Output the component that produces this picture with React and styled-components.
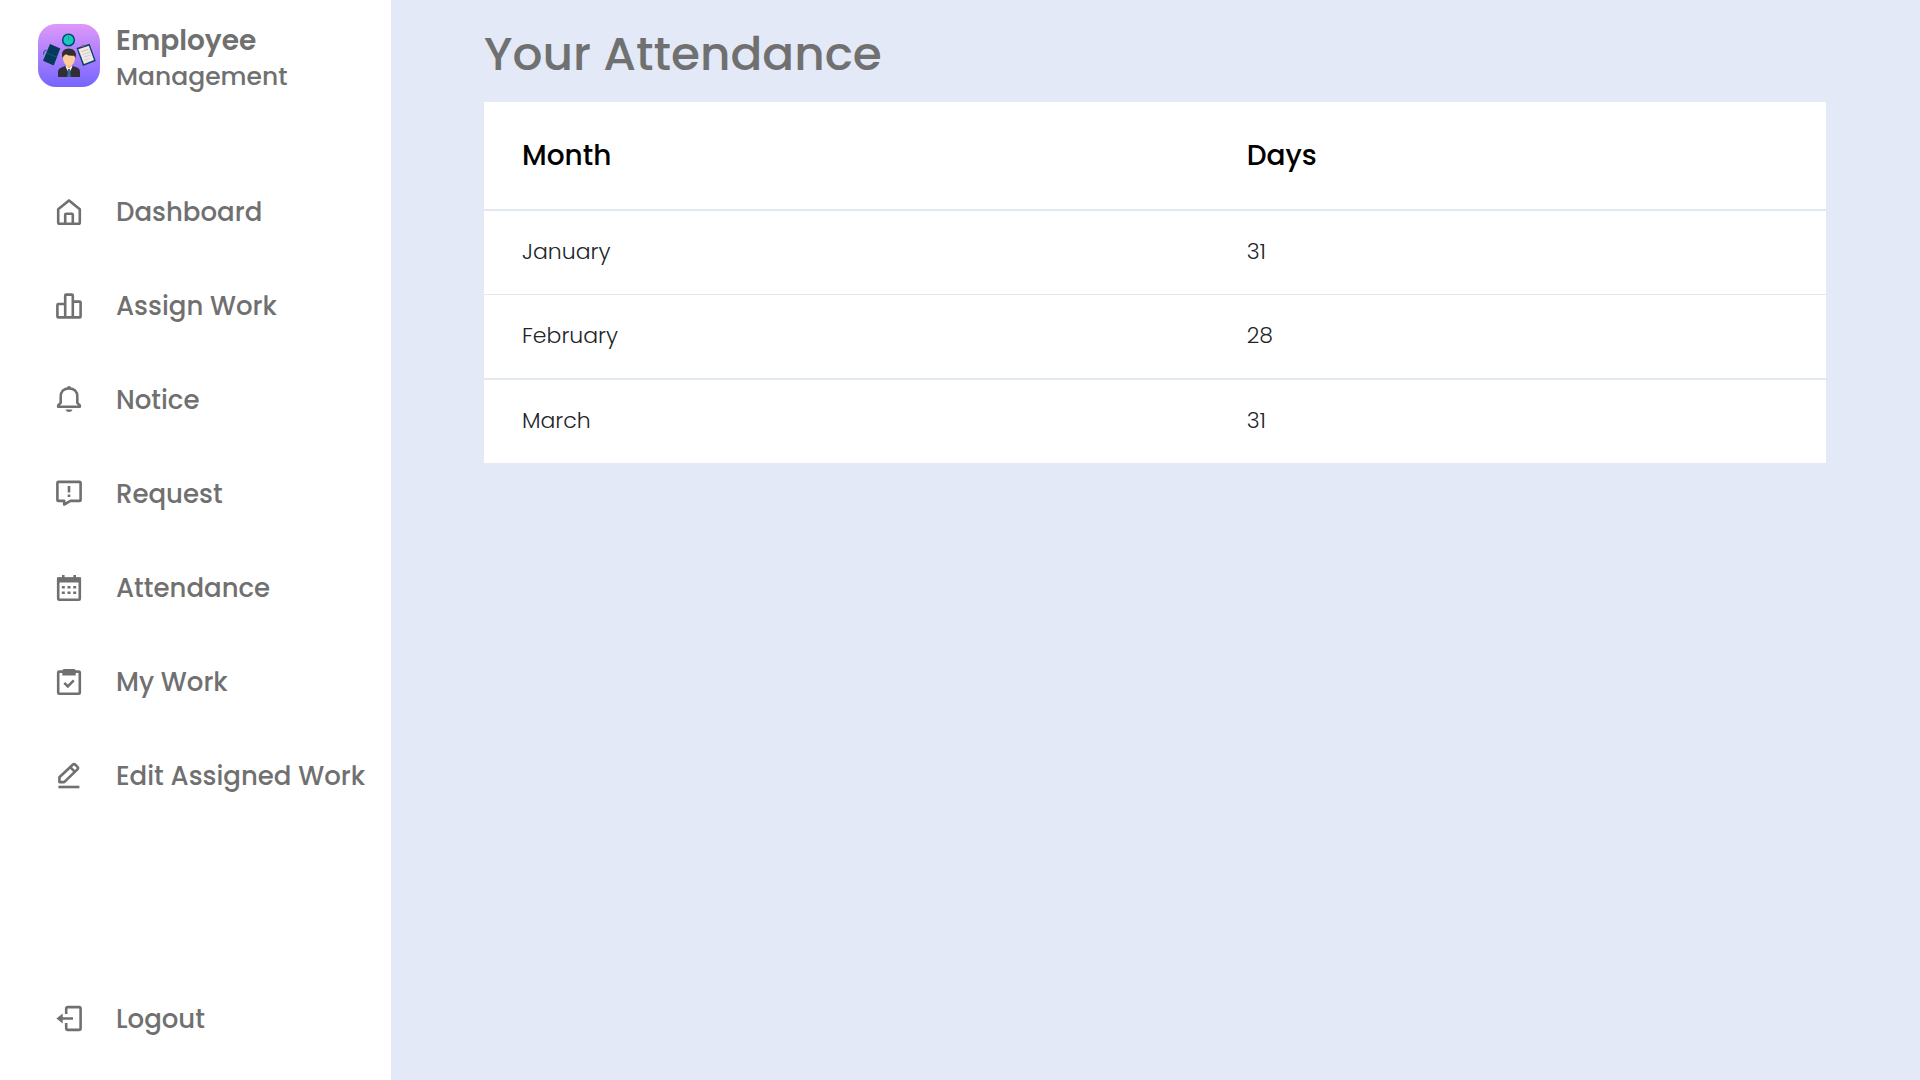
import React from "react";
import styled, { createGlobalStyle } from "styled-components";

const GlobalStyle = createGlobalStyle`
  *, *::before, *::after { box-sizing: border-box; }
  body {
    margin: 0;
    background: #e3e9f7;
    font-family: Poppins, Inter, "Noto Sans", sans-serif;
    color: #707070;
  }
`;

const Page = styled.div`
  display: flex;
  min-height: 100vh;
`;

const Sidebar = styled.aside`
  display: flex;
  flex-direction: column;
  flex: none;
  width: 391px;
  padding: 23px 0 14px 38px;
  background: #fff;
`;

const Brand = styled.header`
  display: flex;
  align-items: flex-start;
  gap: 16px;
`;

const Logo = styled.svg`
  width: 62px;
  height: 64px;
  flex: none;
`;

const BrandText = styled.div`
  display: flex;
  flex-direction: column;
`;

const BrandName = styled.span`
  font-size: 28px;
  line-height: 36px;
  font-weight: 600;
`;

const BrandSub = styled.span`
  font-size: 25px;
  line-height: 36px;
  font-weight: 500;
`;

const Nav = styled.nav`
  display: flex;
  flex-direction: column;
  flex: 1;
  margin-top: 70px;
`;

const NavLink = styled.a`
  display: flex;
  align-items: center;
  gap: 32px;
  height: 94px;
  padding-left: 16px;
  margin-top: ${(p) => (p.$last ? "auto" : "0")};
  color: inherit;
  font-size: 26px;
  line-height: 40px;
  font-weight: 500;
  text-decoration: none;
  white-space: nowrap;
`;

const Icon = styled.svg`
  width: 30px;
  height: 30px;
  flex: none;
  fill: none;
  stroke: currentColor;
  stroke-width: 2.6;
  stroke-linejoin: round;
`;

const Main = styled.main`
  flex: 1;
  min-width: 0;
  padding: 18px 94px 18px 93px;
`;

const Title = styled.h1`
  margin: 0 0 12px;
  font-size: 47px;
  line-height: 72px;
  font-weight: 500;
`;

const Table = styled.table`
  width: 100%;
  border-spacing: 0;
  table-layout: fixed;
  background: #fff;
  text-align: left;
`;

const HeadCell = styled.th`
  width: ${(p) => p.$width};
  height: 109px;
  padding: 0 38px;
  border-bottom: 2px solid #e2e8f0;
  color: #000;
  font-size: 28px;
  font-weight: 500;
`;

const Row = styled.tr`
  --line: 1px;
  &:nth-child(even) { --line: 2px; }
  &:last-child { --line: 0px; }
`;

const Cell = styled.td`
  height: calc(83px + var(--line));
  padding: 0 38px 2px;
  border-bottom: var(--line) solid #e2e8f0;
  color: #212529;
  font-size: 22px;
  line-height: 33px;
  font-weight: 300;
`;

const icons = {
  home: (
    <>
      <path d="M4.2 12.3 15 3.4l10.8 8.9v13.2q0 1.3-1.3 1.3h-19q-1.3 0-1.3-1.3z" />
      <path d="M11.2 26.8v-9q0-1 1-1h5.6q1 0 1 1v9" />
    </>
  ),
  chart: (
    <path d="M11.2 26.4V4.6q0-1 1-1h5.6q1 0 1 1v21.8M11.2 13H4.4q-1 0-1 1v11.4q0 1 1 1h21.2q1 0 1-1V11.6q0-1-1-1h-6.8" />
  ),
  bell: (
    <>
      <path d="M4.2 21.8v-1.4l2.5-2.6v-6.1Q6.7 3.5 15 3.5t8.3 8.2v6.1l2.5 2.600v1.400z" />
      <path d="M11.4 24.400h7.200Q17.600 27 15 27t-3.600-2.600zM12.800 3.400Q13 1 15 1t2.200 2.400z" fill="currentColor" stroke="none" />
    </>
  ),
  request: (
    <>
      <path d="M4.400 2.900h21.200q1 0 1 1v17q0 1-1 1H16.500L10.200 25.500v-3.600H4.400q-1 0-1-1v-17q0-1 1-1z" />
      <path d="M15 6.900v6.600M15 15.500v2.600" />
    </>
  ),
  calendar: (
    <>
      <path d="M4.200 5.600h21.600v20.200q0 1-1 1H5.200q-1 0-1-1z" />
      <path d="M3 4.400h24V9.500H3zM8 2h2.600v3H8zM19.400 2H22v3h-2.600zM7.800 13h3v2.600h-3zM13.500 13h3v2.600h-3zM19.200 13h3v2.600h-3zM7.800 18.400h3V21h-3zM13.500 18.400h3V21h-3zM19.200 18.400h3V21h-3z" fill="currentColor" stroke="none" />
    </>
  ),
  clipboard: (
    <>
      <rect x="4.200" y="4.600" width="21.600" height="22.200" rx="1" />
      <path d="M8.300 4q0-2 1.700-2h10q1.700 0 1.700 2v4.400H8.300z" fill="currentColor" stroke="none" />
      <path d="m10.300 15.800 3.500 3.500 6-6" strokeLinejoin="miter" />
    </>
  ),
  edit: (
    <>
      <path d="M5.400 21.100v-4.800L18.700 3.700q1.300-1.200 2.600 0l2.100 2.100q1.300 1.300 0 2.600L10.200 21.100zM16.200 6.100l4.800 4.800" />
      <path d="M4.400 26h21" />
    </>
  ),
  logout: (
    <>
      <path d="M12.200 10V4.700q0-1.600 1.600-1.600h11.200q1.600 0 1.600 1.600v19.600q0 1.600-1.600 1.600H13.800q-1.600 0-1.600-1.600v-5.300M8 14.500h11" />
      <path d="M2.400 14.500 8.700 9.500v10z" fill="currentColor" stroke="none" />
    </>
  ),
};

const links = [
  { label: "Dashboard", icon: "home" },
  { label: "Assign Work", icon: "chart" },
  { label: "Notice", icon: "bell" },
  { label: "Request", icon: "request" },
  { label: "Attendance", icon: "calendar" },
  { label: "My Work", icon: "clipboard" },
  { label: "Edit Assigned Work", icon: "edit" },
  { label: "Logout", icon: "logout", last: true },
];

const attendance = [
  { month: "January", days: 31 },
  { month: "February", days: 28 },
  { month: "March", days: 31 },
];

function BrandLogo() {
  return (
    <Logo viewBox="0 0 62 64" aria-hidden="true">
      <defs>
        <linearGradient id="logoFill" x1="0" y1="0" x2="0" y2="1">
          <stop offset="0" stopColor="#de98fa" />
          <stop offset="1" stopColor="#7565ff" />
        </linearGradient>
      </defs>
      <rect y="1" width="62" height="63" rx="18" fill="url(#logoFill)" />
      <circle cx="30.500" cy="17" r="5.800" fill="#12cdbf" stroke="#064b72" strokeWidth="1.600" />
      <path d="M30.500 13v4.500" stroke="#5b8e72" strokeWidth="1" />
      <path d="m12 21 10.300 4.600-6.600 17-10.700-4.800z" fill="#07395b" />
      <path d="m8.500 30 10.700 4.200M8.500 27l-2.300 1 -.7 3.500" fill="none" stroke="#075d78" strokeWidth="1" />
      <path d="m38.500 25 13-4.200 6.300 17.300L45 43z" fill="#0a426b" />
      <path d="m40.300 26.200 10.500-3.400 5.200 14.300-10 3.800z" fill="#eee8e8" />
      <path d="m43.500 22.300 2.300-.8.600 1.700-2.300.8z" fill="#d04c66" />
      <path d="m43.500 28.600 7-2.400" stroke="#e9bd78" />
      <path d="m44.700 31.600 7-2.500M45.700 34.400l7-2.500M46.700 37.200l5-1.800" stroke="#c8c2c8" strokeWidth=".8" />
      <path d="M20 54v-5q0-3.500 3.500-4.600L27 43h8l4 1.400q3 1.100 3 4.600v5z" fill="#302f34" />
      <path d="m27.500 43.500 3.500 7 3.500-7-1.500-1.200h-4z" fill="#fff" />
      <path d="M28 38h6v5L31 46l-3-3z" fill="#efb781" />
      <path d="M30 46h2l.8 8h-3.600z" fill="#386ba4" />
      <ellipse cx="31" cy="35" rx="6" ry="8" fill="#ffcc99" />
      <path d="M24.500 35q-2.500-9 6.500-9.500 8.500.5 6.700 9.500l-1.700-2.300q-5 .5-8-1.500-2.500 1-3.500 3.800z" fill="#302f34" />
    </Logo>
  );
}

export default function App() {
  return (
    <Page>
      <GlobalStyle />
      <Sidebar>
        <Brand>
          <BrandLogo />
          <BrandText>
            <BrandName>Employee</BrandName>
            <BrandSub>Management</BrandSub>
          </BrandText>
        </Brand>
        <Nav>
          {links.map((l) => (
            <NavLink key={l.label} href="#" $last={l.last}>
              <Icon viewBox="0 0 30 30" aria-hidden="true">{icons[l.icon]}</Icon>
              {l.label}
            </NavLink>
          ))}
        </Nav>
      </Sidebar>
      <Main>
        <Title>Your Attendance</Title>
        <Table>
          <thead>
            <tr>
              <HeadCell scope="col" $width="54%">Month</HeadCell>
              <HeadCell scope="col" $width="46%">Days</HeadCell>
            </tr>
          </thead>
          <tbody>
            {attendance.map((r) => (
              <Row key={r.month}>
                <Cell>{r.month}</Cell>
                <Cell>{r.days}</Cell>
              </Row>
            ))}
          </tbody>
        </Table>
      </Main>
    </Page>
  );
}
